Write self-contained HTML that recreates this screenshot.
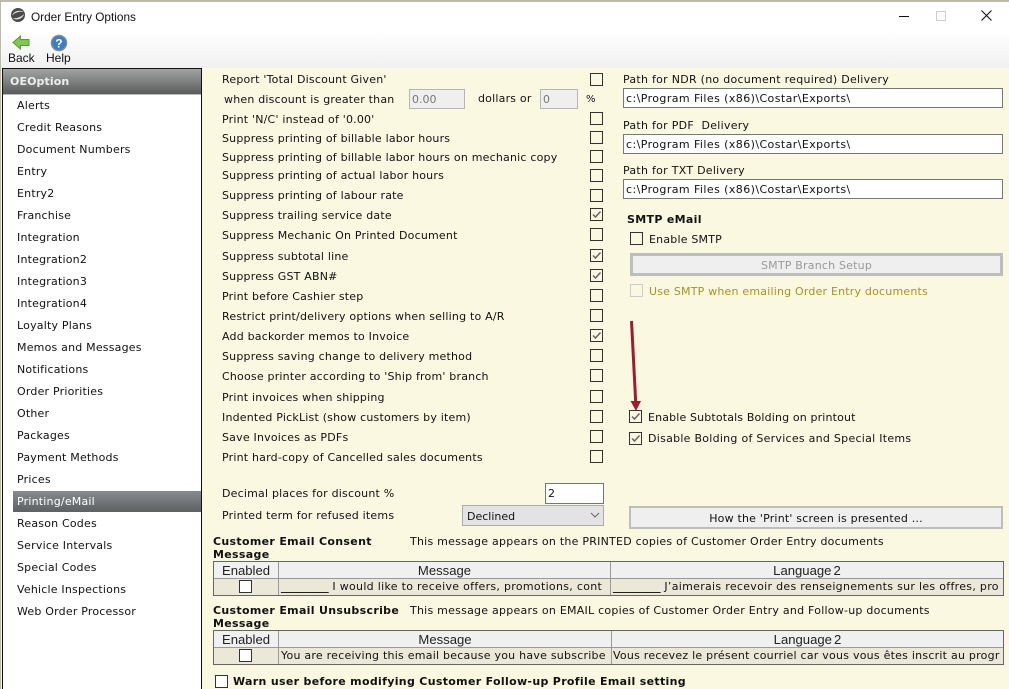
<!DOCTYPE html>
<html><head><meta charset="utf-8"><style>
html,body{margin:0;padding:0;width:1009px;height:689px;overflow:hidden;background:#fff}
body{position:relative;font-family:"DejaVu Sans",Verdana,sans-serif;font-size:11px;color:#111;letter-spacing:.2px}
.t{position:absolute;white-space:nowrap;line-height:14px;height:14px;margin-top:1px}
.b{font-weight:bold;letter-spacing:.32px}
.m{letter-spacing:.24px}
.u{font-size:13.6px;letter-spacing:0;line-height:0}
.a{position:absolute}
.c{position:absolute;width:11px;height:11px;border:1px solid #333;background:#fff}
.c.k{background:#fbf8e2}
.c svg{position:absolute;left:0;top:0}
.n{position:absolute;left:17px;white-space:nowrap;line-height:14px;color:#111;margin-top:1px}
.in{position:absolute;box-sizing:border-box;background:#fff;border:1px solid #777;line-height:20px;padding-left:2px;white-space:nowrap;letter-spacing:0}
.p{letter-spacing:.42px}
.btn{position:absolute;box-sizing:border-box;border:2px solid #bdbdbd;background:#efefef;text-align:center;white-space:nowrap}
.arial{font-family:"Liberation Sans",Arial,sans-serif;font-size:13.1px;text-align:center;position:absolute;line-height:17px;white-space:nowrap;color:#222;letter-spacing:0;word-spacing:-1.5px}
</style></head><body>
<div class="a" style="left:0;top:0;width:1009px;height:2px;background:#bdb9ab"></div>
<div class="a" style="left:0;top:0;width:1px;height:689px;background:#bdb9ab"></div>
<div class="a" style="left:1px;top:68px;width:1px;height:621px;background:#fbf8e2"></div>
<div class="a" style="left:1px;top:32px;width:1008px;height:36px;background:linear-gradient(#fff,#f0f0f0)"></div>
<div class="a" style="left:202px;top:68px;width:807px;height:621px;background:#fbf8e2"></div>

<svg class="a" style="left:10px;top:7px" width="16" height="16" viewBox="0 0 16 16"><circle cx="8" cy="8" r="7" fill="#4a4a4a"/><path d="M2 9C5 5 10 4 14 5 11 3 4 3 2 9Z" fill="#eee"/><path d="M2.5 11C6 12 11 10 14 7 13 12 6 14 2.5 11Z" fill="#ddd"/></svg>
<div class="t" style="left:31px;top:9px;font-family:'Liberation Sans',Arial,sans-serif;font-size:11.8px;letter-spacing:0">Order Entry Options</div>

<div class="a" style="left:899px;top:16px;width:10px;height:1px;background:#111"></div>
<div class="a" style="left:936px;top:11px;width:8px;height:8px;border:1px solid #ccc"></div>
<svg class="a" style="left:981px;top:10px" width="11" height="11" viewBox="0 0 11 11"><path d="M.5.5l10 10M10.500.5l-10 10" stroke="#111" stroke-width="1.100"/></svg>

<svg class="a" style="left:12px;top:35px" width="18" height="15" viewBox="0 0 18 15"><path d="M1 7.500 8.500 1V4.500H17V10.500H8.500V14Z" fill="#7ccb4e" stroke="#5b9b3a"/></svg>
<svg class="a" style="left:50px;top:34px" width="18" height="18" viewBox="0 0 18 18"><circle cx="9" cy="9" r="7.500" fill="#3b7cc4" stroke="#7d8a99" stroke-width="1.500"/><text x="9" y="13.500" text-anchor="middle" font-family="Liberation Sans" font-weight="bold" font-size="12" fill="#fff">?</text></svg>
<div class="t" style="left:8px;top:50px;font-family:'Liberation Sans',Arial,sans-serif;font-size:12px;letter-spacing:0">Back</div>
<div class="t" style="left:46px;top:50px;font-family:'Liberation Sans',Arial,sans-serif;font-size:12px;letter-spacing:0">Help</div>

<!-- sidebar -->
<div class="a" style="left:2px;top:68px;width:198px;height:621px;border:1px solid #111;border-bottom:0;background:#fff;box-sizing:content-box"></div>
<div class="a" style="left:3px;top:69px;width:198px;height:25px;background:linear-gradient(#a3a3a3,#5a5c5c)"></div>
<div class="a" style="left:3px;top:94px;width:198px;height:1px;background:#bbb"></div>
<div class="t b" style="left:10px;top:74px;color:#eee;font-size:11px;letter-spacing:.1px">OEOption</div>
<div class="a" style="left:13px;top:491px;width:188px;height:21px;background:linear-gradient(#868b90,#5e6062)"></div>
<div class="n" style="top:98px">Alerts</div>
<div class="n" style="top:120px">Credit Reasons</div>
<div class="n" style="top:142px">Document Numbers</div>
<div class="n" style="top:164px">Entry</div>
<div class="n" style="top:186px">Entry2</div>
<div class="n" style="top:208px">Franchise</div>
<div class="n" style="top:230px">Integration</div>
<div class="n" style="top:252px">Integration2</div>
<div class="n" style="top:274px">Integration3</div>
<div class="n" style="top:296px">Integration4</div>
<div class="n" style="top:318px">Loyalty Plans</div>
<div class="n" style="top:340px">Memos and Messages</div>
<div class="n" style="top:362px">Notifications</div>
<div class="n" style="top:384px">Order Priorities</div>
<div class="n" style="top:406px">Other</div>
<div class="n" style="top:428px">Packages</div>
<div class="n" style="top:450px">Payment Methods</div>
<div class="n" style="top:472px">Prices</div>
<div class="n" style="top:494px;color:#fff">Printing/eMail</div>
<div class="n" style="top:516px">Reason Codes</div>
<div class="n" style="top:538px">Service Intervals</div>
<div class="n" style="top:560px">Special Codes</div>
<div class="n" style="top:582px">Vehicle Inspections</div>
<div class="n" style="top:604px">Web Order Processor</div>

<!-- left options -->
<div class="t" style="left:222px;top:72px">Report 'Total Discount Given'</div>
<div class="t" style="left:224px;top:92px">when discount is greater than</div>
<div class="in" style="left:409px;top:89px;width:56px;height:20px;background:#efefef;border-color:#b5b5b5;color:#777">0.00</div>
<div class="t" style="left:478px;top:91px">dollars or</div>
<div class="in" style="left:540px;top:89px;width:38px;height:20px;background:#efefef;border-color:#b5b5b5;color:#777">0</div>
<div class="t" style="left:586px;top:92px;font-size:10px">%</div>
<div class="t" style="left:222px;top:112px">Print 'N/C' instead of '0.00'</div>
<div class="t" style="left:222px;top:131px">Suppress printing of billable labor hours</div>
<div class="t" style="left:222px;top:150px">Suppress printing of billable labor hours on mechanic copy</div>
<div class="t" style="left:222px;top:168px">Suppress printing of actual labor hours</div>
<div class="t" style="left:222px;top:188px">Suppress printing of labour rate</div>
<div class="t" style="left:222px;top:208px">Suppress trailing service date</div>
<div class="t" style="left:222px;top:228px">Suppress Mechanic On Printed Document</div>
<div class="t" style="left:222px;top:249px">Suppress subtotal line</div>
<div class="t" style="left:222px;top:269px">Suppress GST ABN#</div>
<div class="t" style="left:222px;top:289px">Print before Cashier step</div>
<div class="t" style="left:222px;top:309px">Restrict print/delivery options when selling to A/R</div>
<div class="t" style="left:222px;top:329px">Add backorder memos to Invoice</div>
<div class="t" style="left:222px;top:349px">Suppress saving change to delivery method</div>
<div class="t" style="left:222px;top:369px">Choose printer according to 'Ship from' branch</div>
<div class="t" style="left:222px;top:390px">Print invoices when shipping</div>
<div class="t" style="left:222px;top:410px">Indented PickList (show customers by item)</div>
<div class="t" style="left:222px;top:430px">Save Invoices as PDFs</div>
<div class="t" style="left:222px;top:450px">Print hard-copy of Cancelled sales documents</div>

<div class="c k" style="left:590px;top:73px"></div>
<div class="c k" style="left:590px;top:112px"></div>
<div class="c k" style="left:590px;top:131px"></div>
<div class="c k" style="left:590px;top:150px"></div>
<div class="c k" style="left:590px;top:169px"></div>
<div class="c k" style="left:590px;top:189px"></div>
<div class="c k" style="left:590px;top:208px"><svg width="11" height="11"><path d="M2 5.500 4.500 8 9.500 2.500" fill="none" stroke="#666" stroke-width="1.500"/></svg></div>
<div class="c k" style="left:590px;top:228px"></div>
<div class="c k" style="left:590px;top:249px"><svg width="11" height="11"><path d="M2 5.500 4.500 8 9.500 2.500" fill="none" stroke="#666" stroke-width="1.500"/></svg></div>
<div class="c k" style="left:590px;top:269px"><svg width="11" height="11"><path d="M2 5.500 4.500 8 9.500 2.500" fill="none" stroke="#666" stroke-width="1.500"/></svg></div>
<div class="c k" style="left:590px;top:289px"></div>
<div class="c k" style="left:590px;top:309px"></div>
<div class="c k" style="left:590px;top:329px"><svg width="11" height="11"><path d="M2 5.500 4.500 8 9.500 2.500" fill="none" stroke="#666" stroke-width="1.500"/></svg></div>
<div class="c k" style="left:590px;top:349px"></div>
<div class="c k" style="left:590px;top:369px"></div>
<div class="c k" style="left:590px;top:390px"></div>
<div class="c k" style="left:590px;top:410px"></div>
<div class="c k" style="left:590px;top:430px"></div>
<div class="c k" style="left:590px;top:450px"></div>

<div class="t" style="left:222px;top:486px">Decimal places for discount %</div>
<div class="in" style="left:545px;top:483px;width:59px;height:21px">2</div>
<div class="t" style="left:222px;top:508px">Printed term for refused items</div>
<div class="in" style="left:462px;top:505px;width:142px;height:21px;background:#e3e3e3;border-color:#ababab;padding-left:4px;line-height:22px">Declined</div>
<svg class="a" style="left:590px;top:512px" width="10" height="7"><path d="M1 1 5 5 9 1" fill="none" stroke="#666"/></svg>

<!-- right -->
<div class="t" style="left:623px;top:72px;letter-spacing:.27px">Path for NDR (no document required) Delivery</div>
<div class="in p" style="left:623px;top:88px;width:380px;height:20px">c:\Program Files (x86)\Costar\Exports\</div>
<div class="t" style="left:623px;top:118px;letter-spacing:.27px">Path for PDF&nbsp; Delivery</div>
<div class="in p" style="left:623px;top:134px;width:380px;height:20px">c:\Program Files (x86)\Costar\Exports\</div>
<div class="t" style="left:623px;top:163px;letter-spacing:.27px">Path for TXT Delivery</div>
<div class="in p" style="left:623px;top:179px;width:380px;height:20px">c:\Program Files (x86)\Costar\Exports\</div>
<div class="t b" style="left:627px;top:212px">SMTP eMail</div>
<div class="c" style="left:630px;top:232px;background:#fbf8e2"></div>
<div class="t" style="left:649px;top:232px">Enable SMTP</div>
<div class="btn" style="left:630px;top:253px;width:373px;height:23px;color:#999;border-width:3px;line-height:19px">SMTP Branch Setup</div>
<div class="c" style="left:630px;top:284px;background:#fbf8e2;border-color:#ccc"></div>
<div class="t" style="left:649px;top:284px;color:#a89220">Use SMTP when emailing Order Entry documents</div>

<div class="c" style="left:629px;top:410px;background:#fbf8e2"><svg width="11" height="11"><path d="M2 5.500 4.500 8 9.500 2.500" fill="none" stroke="#666" stroke-width="1.500"/></svg></div>
<div class="t" style="left:648px;top:410px;letter-spacing:.15px">Enable Subtotals Bolding on printout</div>
<div class="c" style="left:629px;top:432px;background:#fbf8e2"><svg width="11" height="11"><path d="M2 5.500 4.500 8 9.500 2.500" fill="none" stroke="#666" stroke-width="1.500"/></svg></div>
<div class="t" style="left:648px;top:431px;letter-spacing:.27px">Disable Bolding of Services and Special Items</div>
<svg class="a" style="left:625px;top:318px" width="20" height="102"><path d="M6.500 3 10.800 86" stroke="#9c1c30" stroke-width="3" fill="none"/><path d="M5.500 83 16 83 11 93Z" fill="#9c1c30"/></svg>

<div class="btn" style="left:629px;top:506px;width:374px;height:23px;border-width:2px;line-height:21px;color:#111">How the 'Print' screen is presented ...</div>

<!-- consent -->
<div class="t b" style="left:213px;top:534px">Customer Email Consent</div>
<div class="t b" style="left:213px;top:547px">Message</div>
<div class="t m" style="left:410px;top:534px">This message appears on the PRINTED copies of Customer Order Entry documents</div>
<div class="a" style="left:213px;top:561px;width:789px;height:33px;border:1px solid #666;background:#ebe8d8"></div>
<div class="a" style="left:214px;top:562px;width:789px;height:16px;background:#f0f0f0"></div>
<div class="a" style="left:214px;top:578px;width:789px;height:1px;background:#999"></div>
<div class="a" style="left:278px;top:562px;width:1px;height:33px;background:#999"></div>
<div class="a" style="left:610px;top:562px;width:1px;height:33px;background:#999"></div>
<div class="arial" style="left:214px;top:562px;width:64px">Enabled</div>
<div class="arial" style="left:279px;top:562px;width:331px">Message</div>
<div class="arial" style="left:611px;top:562px;width:392px">Language 2</div>
<div class="c" style="left:239px;top:580px"></div>
<div class="t" style="left:281px;top:579px;letter-spacing:.3px"><span class="u">_______</span> I would like to receive offers, promotions, cont</div>
<div class="t" style="left:613px;top:579px;letter-spacing:.3px"><span class="u">_______</span> J’aimerais recevoir des renseignements sur les offres, pro</div>

<!-- unsubscribe -->
<div class="t b" style="left:213px;top:603px">Customer Email Unsubscribe</div>
<div class="t b" style="left:213px;top:616px">Message</div>
<div class="t m" style="left:410px;top:603px">This message appears on EMAIL copies of Customer Order Entry and Follow-up documents</div>
<div class="a" style="left:213px;top:630px;width:789px;height:33px;border:1px solid #666;background:#ebe8d8"></div>
<div class="a" style="left:214px;top:631px;width:789px;height:16px;background:#f0f0f0"></div>
<div class="a" style="left:214px;top:647px;width:789px;height:1px;background:#999"></div>
<div class="a" style="left:278px;top:631px;width:1px;height:33px;background:#999"></div>
<div class="a" style="left:611px;top:631px;width:1px;height:33px;background:#999"></div>
<div class="arial" style="left:214px;top:631px;width:64px">Enabled</div>
<div class="arial" style="left:279px;top:631px;width:332px">Message</div>
<div class="arial" style="left:612px;top:631px;width:391px">Language 2</div>
<div class="c" style="left:239px;top:649px"></div>
<div class="t m" style="left:281px;top:648px">You are receiving this email because you have subscribe</div>
<div class="t m" style="left:613px;top:648px">Vous recevez le présent courriel car vous vous êtes inscrit au progr</div>

<div class="c" style="left:215px;top:675px"></div>
<div class="t b" style="left:233px;top:674px">Warn user before modifying Customer Follow-up Profile Email setting</div>
</body></html>
